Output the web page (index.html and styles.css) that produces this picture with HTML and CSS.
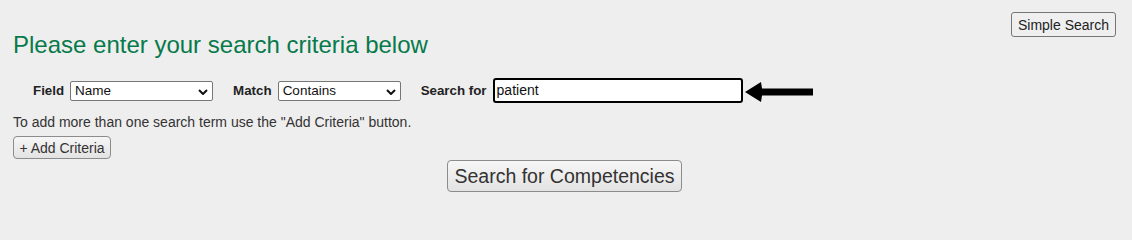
FILE: index.html
```html
<!DOCTYPE html>
<html lang="en">
<head>
<meta charset="utf-8">
<title>Advanced Search</title>
<link rel="stylesheet" href="styles.css">
</head>
<body>
<div class="page">
  <div class="header">
    <h1 class="title">Please enter your search criteria below</h1>
    <button class="btn btn-flat" type="button">Simple Search</button>
  </div>
  <div class="criteria-row">
    <div class="group">
      <span class="label">Field</span>
      <div class="select select-field"><span class="select-text">Name</span>
        <svg class="chev" width="10" height="6" viewBox="0 0 10 6"><polyline points="1,1 5,5 9,1" fill="none" stroke="#111" stroke-width="2"/></svg>
      </div>
    </div>
    <div class="group">
      <span class="label">Match</span>
      <div class="select select-match"><span class="select-text">Contains</span>
        <svg class="chev" width="10" height="6" viewBox="0 0 10 6"><polyline points="1,1 5,5 9,1" fill="none" stroke="#111" stroke-width="2"/></svg>
      </div>
    </div>
    <div class="group">
      <span class="label">Search for</span>
      <div class="text-input">patient</div>
      <svg class="arrow" width="68" height="20" viewBox="0 0 68 20"><polygon points="0,10 16,0 17,6.5 68,6.5 68,13.5 17,13.5 16,20" fill="#000"/></svg>
    </div>
  </div>
  <p class="hint">To add more than one search term use the "Add Criteria" button.</p>
  <div class="add-row"><button class="btn btn-grad btn-add" type="button">+ Add Criteria</button></div>
  <div class="submit-row"><button class="btn btn-grad btn-submit" type="button">Search for Competencies</button></div>
</div>
</body>
</html>
```
FILE: styles.css
```css
html, body {
  margin: 0;
  padding: 0;
  background: #eeeeee;
}
html {
  height: 206px;
  overflow: hidden;
}
body {
  font-family: "Liberation Sans", Arial, sans-serif;
  color: #222;
  width: 1132px;
  height: 206px;
  overflow: hidden;
}
.page {
  padding: 12px 16px 0 13px;
  display: flex;
  flex-direction: column;
}
.header {
  display: flex;
  justify-content: space-between;
  align-items: flex-start;
  height: 47px;
}
.title {
  margin: 19px 0 0 0;
  font-size: 24px;
  line-height: 28px;
  font-weight: normal;
  color: #077a4b;
}
.btn {
  font-family: "Liberation Sans", Arial, sans-serif;
  font-size: 14px;
  color: #222;
  cursor: pointer;
  margin: 0;
}
.btn-flat {
  height: 25px;
  width: 105px;
  padding: 0;
  background: #efefef;
  border: 1px solid #767676;
  border-radius: 3px;
}
.btn-grad {
  background: linear-gradient(#f6f6f6, #e3e3e3);
  border: 1px solid #8c8c8c;
  border-radius: 4px;
  padding: 0;
  color: #333;
}
.criteria-row {
  margin-top: 19px;
  padding-left: 20px;
  display: flex;
  align-items: center;
  height: 25px;
}
.group {
  display: flex;
  align-items: center;
  margin-right: 20px;
}
.label {
  font-weight: bold;
  font-size: 13.33px;
  margin-right: 6px;
}
.select {
  box-sizing: border-box;
  height: 20px;
  margin-top: 1px;
  background: #fff;
  border: 1px solid #767676;
  border-radius: 2px;
  display: flex;
  align-items: center;
  justify-content: space-between;
  padding: 0 4px 0 4px;
  font-size: 13.5px;
  color: #111;
}
.select-field { width: 143px; }
.select-match { width: 123px; }
.select-text { line-height: 16px; }
.chev { display: block; margin-top: 1px; }
.text-input {
  box-sizing: border-box;
  width: 250px;
  height: 25px;
  background: #fff;
  border: 2px solid #000;
  border-radius: 3px;
  padding: 0 2px;
  font-size: 14px;
  line-height: 21px;
  color: #111;
}
.arrow {
  display: block;
  margin-left: 2px;
  margin-top: 2px;
}
.hint {
  margin: 11px 0 0 0;
  font-size: 14px;
  line-height: 16px;
  color: #333;
}
.add-row {
  margin-top: 6px;
  display: flex;
}
.btn-add {
  width: 98px;
  height: 23px;
}
.submit-row {
  margin-top: 1px;
  display: flex;
  justify-content: center;
}
.btn-submit {
  width: 235px;
  height: 32px;
  font-size: 19.5px;
}
```
